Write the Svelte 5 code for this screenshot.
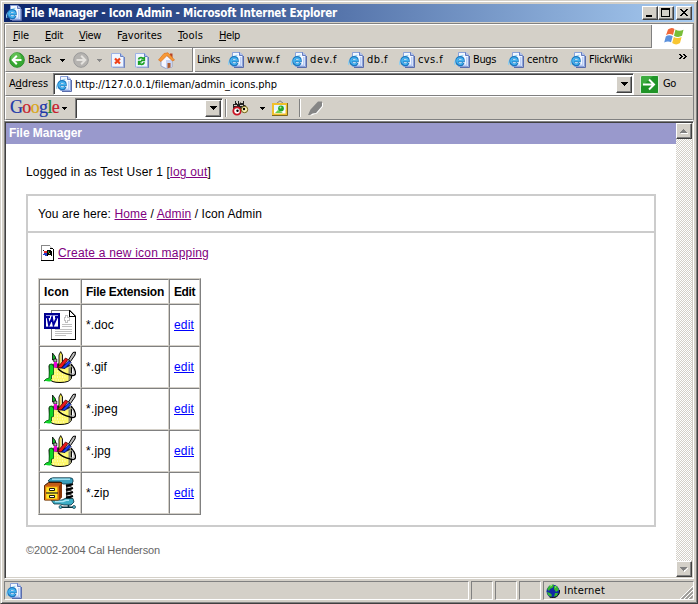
<script>
  const menus = [
    { key: 'F', rest: 'ile', w: 16, gap: 16 },
    { key: 'E', rest: 'dit', w: 18, gap: 16 },
    { key: 'V', rest: 'iew', w: 22, gap: 16 },
    { pre: 'F', key: 'a', rest: 'vorites', w: 45, gap: 16 },
    { key: 'T', rest: 'ools', w: 25, gap: 16 },
    { key: 'H', rest: 'elp', w: 21, gap: 0 }
  ];
  const links = [
    { name: 'www.f', w: 33, slot: 63 },
    { name: 'dev.f', w: 27, slot: 57 },
    { name: 'db.f', w: 21, slot: 51 },
    { name: 'cvs.f', w: 25, slot: 55 },
    { name: 'Bugs', w: 23, slot: 54 },
    { name: 'centro', w: 31, slot: 62 },
    { name: 'FlickrWiki', w: 43, slot: 70 }
  ];
  const rows = [
    { ext: '*.doc', kind: 'doc', w: 28 },
    { ext: '*.gif', kind: 'art', w: 21 },
    { ext: '*.jpeg', kind: 'art', w: 32 },
    { ext: '*.jpg', kind: 'art', w: 25 },
    { ext: '*.zip', kind: 'zip', w: 23 }
  ];

  // Spreads the letters so that a label takes its intended width.
  function fit(node, width) {
    const set = () => {
      node.style.letterSpacing = '0px';
      const natural = node.getBoundingClientRect().width;
      node.style.letterSpacing = (width - natural) / node.textContent.length + 'px';
    };
    set();
    document.fonts?.ready.then(set);
  }
</script>

{#snippet ie()}
  <svg class="ie" width="16" height="16" viewBox="0 0 16 16">
    <path d="M6 15.500h9.500V4" fill="none" stroke="#5a6cab" />
    <path d="M4.500 .5h7.500l2.500 2.500v11.500h-10z" fill="#f4f8ff" stroke="#8ba3da" />
    <path d="M11.500 .5v3h3" fill="#a9bdee" stroke="#4a62ae" stroke-width=".8" />
    <path d="M12.800 5v8.200H8" fill="none" stroke="#b7c9f4" stroke-width="1.400" />
    <path d="M1 13C-1 9.500 4 4 9.500 3" fill="none" stroke="#8fd0f2" stroke-width="1.200" />
    <path d="M2.600 9h6.900c0-4.900-6.900-4.900-6.900 0 0 4.700 5.300 4.900 6.800 1.900" fill="none" stroke="#1a74bd" stroke-width="2.500" />
    <path d="M2.800 8.700h6.400c-.4-3.900-6.200-3.700-6.400.3.200 3.500 4.200 4.200 5.800 2" fill="none" stroke="#45b3ef" stroke-width="1.500" />
  </svg>
{/snippet}

{#snippet down()}
  <svg width="5" height="3" viewBox="0 0 5 3" shape-rendering="crispEdges"><path d="M0 0h5v1h-1v1h-1v1h-1v-1h-1v-1h-1z" fill="currentColor" /></svg>
{/snippet}

{#snippet combo()}
  <div class="combo"><svg width="7" height="4" viewBox="0 0 7 4" shape-rendering="crispEdges"><path d="M0 0h7v1h-1v1h-1v1h-1v1h-1v-1h-1v-1h-1v-1h-1z" /></svg></div>
{/snippet}

{#snippet scrollBtn(up)}
  <div class="sbtn">
    <svg width="8" height="5" viewBox="0 0 8 5" shape-rendering="crispEdges">
      {#if up}
        <path d="M1 4h7v1h-7z" fill="#fff" /><path d="M3 0h1v1h1v1h1v1h1v1h-7v-1h1v-1h1v-1h1z" fill="#808080" />
      {:else}
        <path d="M7 1h1v1h-1v1h-1v1h-1v1h-1v-2h2z" fill="#fff" /><path d="M0 0h7v1h-1v1h-1v1h-1v1h-1v-1h-1v-1h-1v-1h-1z" fill="#808080" />
      {/if}
    </svg>
  </div>
{/snippet}

<div class="window">
  <div class="title">
    {@render ie()}
    <b><span use:fit={313}>File Manager - Icon Admin - Microsoft Internet Explorer</span></b>
    <div class="wbtns">
      <i><svg width="12" height="10" shape-rendering="crispEdges"><path d="M2 7h6v2h-6z" /></svg></i>
      <i><svg width="12" height="10" shape-rendering="crispEdges"><path fill-rule="evenodd" d="M1 0h9v9h-9zM2 2v6h7v-6z" /></svg></i>
      <i class="close"><svg width="12" height="10" shape-rendering="crispEdges"><path d="M2 1h2v1h1v1h2v-1h1v-1h2v1h-1v1h-1v1h-1v1h1v1h1v1h1v1h-2v-1h-1v-1h-2v1h-1v1h-2v-1h1v-1h1v-1h1v-1h-1v-1h-1v-1h-1z" /></svg></i>
    </div>
  </div>

  <div class="rebar">
    <div class="band menu">
      {#each menus as m}
        <span class="item" style:width="{m.w + m.gap}px"><span use:fit={m.w}>{m.pre ?? ''}<u>{m.key}</u>{m.rest}</span></span>
      {/each}
      <div class="flag">
        <svg width="20" height="19" viewBox="0 0 20 19">
          <path d="M4 2.500Q7.500-.3 10.500 2L9 8Q5.500 6 2 8.300z" fill="#f06838" />
          <path d="M11.500 2.500Q15 5 19.500 2.700L18 8.800Q14 11 10 8.700z" fill="#78bd38" />
          <path d="M1.800 9.400Q5 7 8.700 9.300L7 15.300Q4 13.500 .2 15.500z" fill="#5b91dd" />
          <path d="M9.800 10Q13.500 12 17.600 9.900L16 16Q12 18.800 8.200 16z" fill="#f8c632" />
        </svg>
      </div>
    </div>

    <div class="band tools">
      <svg class="back" width="16" height="16" viewBox="0 0 16 16"><circle cx="8" cy="8" r="7.300" fill="#37a832" stroke="#2b8f2c" /><circle cx="7" cy="5.500" r="5" fill="#7bd168" opacity=".6" /><path d="M7.800 3.800L3.700 8l4.100 4.200M4 8h8.500" stroke="#fff" stroke-width="2" fill="none" /></svg>
      <span class="backtext"><span use:fit={23}>Back</span></span>
      <span class="dd">{@render down()}</span>
      <svg class="fwd" width="16" height="16" viewBox="0 0 16 16"><circle cx="8" cy="8" r="7.300" fill="#b5b3b0" stroke="#999" /><path d="M8.200 3.800L12.300 8l-4.100 4.200M12 8H3.500" stroke="#e4e2de" stroke-width="2" fill="none" /></svg>
      <span class="dd dim">{@render down()}</span>
      <svg class="stop" width="14" height="16" viewBox="0 0 14 16"><path d="M13.500 5v10.800H2" fill="none" stroke="#6f82bb" /><path d="M.5 1.500h9l3 3v10.500h-12z" fill="#f0f6ff" stroke="#9db2e4" /><path d="M9.500 1.500v3h3" fill="#a9bdec" stroke="#6a82c2" /><path d="M4 6.500l5 5M9 6.500l-5 5" stroke="#f04018" stroke-width="2.200" /></svg>
      <svg class="refresh" width="14" height="16" viewBox="0 0 14 16"><path d="M13.500 5v10.800H2" fill="none" stroke="#6f82bb" /><path d="M.5 1.500h9l3 3v10.500h-12z" fill="#f0f6ff" stroke="#9db2e4" /><path d="M9.500 1.500v3h3" fill="#a9bdec" stroke="#6a82c2" /><path d="M3.500 7.500c.5-2.500 4-2.500 4.800-.6M9.300 5V8.300H6M9.300 10.200c-.8 2.700-4 2.700-5 .7M3.700 13V9.700h3" stroke="#1ba124" stroke-width="1.700" fill="none" /></svg>
      <svg class="home" width="17" height="17" viewBox="0 0 17 17"><path d="M3 8l5-5 6 5v7l-6 1.500-5-2.500z" fill="#f5f6ff" stroke="#8797c4" stroke-width=".8" /><path d="M8 8v8.500l6-1.500V8z" fill="#c7d3f3" /><path d="M12 1.500h2.500v5l-2.500-2z" fill="#b84524" /><path d="M.5 8L6 1.500l4-.7L16.500 8l-2 1L9 3.500 3 9.500z" fill="#f79a37" stroke="#df721c" stroke-width=".7" /><path d="M9.500 11h3v4.500l-3 .7z" fill="#b05c2e" /></svg>
      <div class="sep2"></div>
      <span class="lk"><span use:fit={23}>Links</span></span>
      {#each links as l}
        <span class="link" style:width="{l.slot}px">{@render ie()}<span use:fit={l.w}>{l.name}</span></span>
      {/each}
      <svg class="chev" width="8" height="5" viewBox="0 0 8 5" shape-rendering="crispEdges"><path d="M0 0h2v1h1v1h1v1h-1v1h-1v1h-2v-1h1v-1h1v-1h-1v-1h-1zM4 0h2v1h1v1h1v1h-1v1h-1v1h-2v-1h1v-1h1v-1h-1v-1h-1z" /></svg>
    </div>

    <div class="band addr">
      <span class="alabel"><span use:fit={39}>A<u>d</u>dress</span></span>
      <div class="field url">{@render ie()}<span class="utext"><span use:fit={202}>http://127.0.0.1/fileman/admin_icons.php</span></span>{@render combo()}</div>
      <svg class="go" width="19" height="19" viewBox="0 0 19 19"><rect x=".5" y=".5" width="18" height="18" rx="1.500" fill="#3cab3f" stroke="#dfeedd" /><path d="M1 18V12L13 1h5v17z" fill="#0b8618" opacity=".6" /><path d="M3 9.500h11M9 4.500l5 5-5 5" fill="none" stroke="#fff" stroke-width="2" /></svg>
      <span use:fit={13}>Go</span>
    </div>

    <div class="band google">
      <span class="glogo"><span use:fit={49}><em class="b">G</em><em class="r">o</em><em class="y">o</em><em class="b">g</em><em class="g">l</em><em class="r">e</em></span></span>
      <span class="dd">{@render down()}</span>
      <div class="field search">{@render combo()}</div>
      <div class="sep"></div>
      <svg class="bino" width="17" height="16" viewBox="0 0 17 16"><path d="M1 9V4h2V1h1v2h2V1h1v3l2-2v1h2V1h1v3l2 2v3z" fill="#222" /><path d="M2 5.500h3M8 5.500h3M5 3.500h1M12 4.500h1" stroke="#d4d0c8" /><circle cx="5" cy="11" r="3.700" fill="#fff" stroke="#c91423" stroke-width="1.800" /><circle cx="5.500" cy="10.800" r="1.200" /><circle cx="12.500" cy="9.500" r="3.200" fill="#fbf5bb" stroke="#6c5a10" stroke-width="1" /><circle cx="12" cy="9" r="1.200" /></svg>
      <span class="dd">{@render down()}</span>
      <svg class="pic" width="16" height="16" viewBox="0 0 16 16"><path d="M4.500 3.500L8 .8l3.500 2.700" fill="none" stroke="#666" stroke-width=".8" /><rect x="1" y="4" width="13.500" height="10.500" fill="#fff" stroke="#efbf2c" stroke-width="2" /><path d="M0 15.500h15.500V3" fill="none" stroke="#7c6720" stroke-width="1" /><path d="M2 5h11.500v5H2z" fill="#e2f3ff" /><circle cx="9" cy="8.500" r="2.900" fill="#23a62c" /><path d="M3 13l3-3 5 3z" fill="#6ccf50" /><circle cx="8.500" cy="7.500" r="1" fill="#b4efa0" /></svg>
      <div class="sep s3"></div>
      <svg class="pen" width="16" height="15" viewBox="0 0 16 15"><path d="M2 15l5-2 2-.5 6-7V2h-1z" fill="#fff" /><path d="M0 14L2.500 8.500l7.500-8h4V5l-6 7-3.500.5L2 14z" fill="#858585" /></svg>
    </div>
  </div>

  <div class="view">
    <div class="page">
      <div class="phead"><span use:fit={73}>File Manager</span></div>
      <div class="login"><span use:fit={185}>Logged in as Test User 1 [<a class="v" href="#out">log out</a>]</span></div>
      <div class="box">
        <div class="crumbs"><span use:fit={224}>You are here: <a class="v" href="#home">Home</a> / <a class="v" href="#admin">Admin</a> / Icon Admin</span></div>
        <div class="inner">
          <div class="create">
            <svg width="13" height="16" viewBox="0 0 13 16" shape-rendering="crispEdges"><path d="M0 0h9v1h1v1h1v1h1v1h1v12h-13z" fill="#000" /><path d="M0 0h9v1h-8v14h-1z" fill="#888" /><path d="M1 1h8v3h3v11h-11z" fill="#fff" /><path d="M9 1h1v1h1v1h-2z" fill="#ccc" /><path d="M6 5h4v1h1v5h-1v-1h-3v1h-1z" /><path d="M2 5h1v1h-1zM4 6h2v1h-2zM3 9h2v1h-2z" fill="#111" /><path d="M3 6h3v2h-3z" fill="#e32b2b" /><path d="M3 8h3v3h-2v-1h-2v-1h1z" fill="#223cc9" /><path d="M7 6h1v2h-1z" fill="#248a33" /><path d="M8 8h1v1h-1z" fill="#e6d626" /></svg>
            <a class="v" href="#create"><span use:fit={151}>Create a new icon mapping</span></a>
          </div>
          <table>
            <thead>
              <tr><th class="c1"><span use:fit={25}>Icon</span></th><th class="c2"><span use:fit={78}>File Extension</span></th><th class="c3"><span use:fit={21}>Edit</span></th></tr>
            </thead>
            <tbody>
              {#each rows as r}
                <tr>
                  <td>
                    {#if r.kind === 'doc'}
                      <svg width="32" height="32" viewBox="0 0 32 32" shape-rendering="crispEdges">
                        <path d="M7 1h19l6 6v24H7z" fill="#808080" />
                        <path d="M8 2h17v6h6v22H8z" fill="#fff" />
                        <path d="M25 1h1v1h1v1h1v1h1v1h1v1h1v1h1v24H7v-1h24V8h-6z" />
                        <path d="M26 3v4h4z" fill="#fff" />
                        <path d="M21 6h3v2h2v4h-2v2h-3v-2h-1V8h1z" fill="#c0c0c0" /><path d="M22 7h1v2h2v2h-2v2h-1v-2h-1V9h1z" fill="#fff" />
                        <path d="M18 15h10v1H18zM18 17h10v1H18zM11 20h17v1H11zM11 22h17v1H11zM11 24h17v1H11zM11 26h11v1H11z" fill="#c0c0c0" />
                        <path d="M0 4h16v16H0z" fill="#000090" /><path d="M2 6h12v12H2z" fill="#fff" />
                        <path d="M2 6h12v1H2zM2 17h12v1H2z" fill="#9a9ae0" />
                        <g shape-rendering="auto"><path d="M3.500 8l1.500 8L8 9l1.500 7L13 8M2 8h4M7 8.500h2M11 8h3" fill="none" stroke="#0000a0" stroke-width="1.900" /></g>
                      </svg>
                    {:else if r.kind === 'art'}
                      <svg width="32" height="32" viewBox="0 0 32 32">
                        <path d="M5 14.500Q16 11 27.500 14.500V27Q26 31.500 16 31.500 7 31.500 6 28z" fill="#fdf86a" stroke="#000" />
                        <path d="M24.500 17v13q2.500-1 2.500-3.500V15z" fill="#8e8e72" />
                        <ellipse cx="16.300" cy="14.700" rx="10.300" ry="2.700" fill="#303030" stroke="#d8d8b0" stroke-width=".8" />
                        <path d="M8 20h14M8 23h15M8 26h15M9 29h12" stroke="#fffde8" stroke-width="1" stroke-dasharray="1 1.500" />
                        <path d="M8.500 2l3 4v3h-3z" fill="#12b52a" stroke="#000" stroke-width=".8" />
                        <path d="M9.800 8h3v3h-3z" fill="#b8b8b8" stroke="#000" stroke-width=".7" /><path d="M10 11h3v5.500h-3z" fill="#ee00d8" />
                        <path d="M15 16V4L16.700.6 18.500 4v12z" fill="#fff54a" stroke="#000" stroke-width=".9" /><path d="M17.200 4v12" stroke="#c0c0c0" />
                        <path d="M13.500 16.500L21.500 7l2.500 1.500L17.500 17z" fill="#ea1818" stroke="#500" stroke-width=".8" />
                        <path d="M17.500 17L25 9.500l2 2L21 17.500z" fill="#153ff0" stroke="#003" stroke-width=".8" />
                        <path d="M24.500 9l4.500-7.500 2.500-.5-.5 3-4.500 6.500z" fill="#bcbcbc" stroke="#000" stroke-width="1" />
                        <path d="M27 13q4.500 5 4.500 9.500-1 3-5 1.500-9-2-12.500-6.500" fill="none" stroke="#000" stroke-width="1.400" />
                        <path d="M27.500 15q2.800 4 2.800 7-2 1.800-4.300.7" fill="none" stroke="#bbb" />
                        <path d="M5.500 13.500q3-2 4 2v8l-2 .5v4l-3 1.500H1l-1 .5 2-2 3-1z" fill="#10d628" stroke="#064d10" stroke-width=".8" />
                        <path d="M.5 29.500q3-3 6.500-1l1 1.500q-3 1-7.500-.5z" fill="#10d628" />
                      </svg>
                    {:else}
                      <svg width="32" height="32" viewBox="0 0 32 32">
                        <path d="M22 6h5.500v17H22z" fill="#444" />
                        <path d="M22 9l7-2M22 13l7-2M22 17l7-2M22 21l7-2" stroke="#000" stroke-width="2" /><path d="M23.500 10.500h3M23.500 14.500h3M23.500 18.500h3" stroke="#ccc" />
                        <path d="M4 4Q6 .8 9 .8h17q3 0 3 2.200v2q-1 2-4 2h-6l-3-2.300H6z" fill="#3a9fbd" stroke="#08313f" stroke-width=".8" /><path d="M8 2.200h18" stroke="#a9e6f5" stroke-width="1.400" />
                        <path d="M7 23h11l3-1.500h8l1 3.500-3 3h-7l-4-1h-6z" fill="#3cadc5" stroke="#08313f" stroke-width=".8" /><path d="M11 24.500h8l3-1.200h3" stroke="#a9e6f5" stroke-width="1.400" fill="none" />
                        <path d="M24.500 28v3M17 30.300h12" stroke="#082f3c" stroke-width="1.600" /><circle cx="16.500" cy="30" r="1.500" fill="#58c3d7" stroke="#082f3c" stroke-width=".7" /><circle cx="30" cy="30" r="1.500" fill="#58c3d7" stroke="#082f3c" stroke-width=".7" />
                        <path d="M.5 8.500l4-3h13v14.500l-3 3H.5z" fill="#c05a18" stroke="#3c1a02" /><path d="M15 9l3-3v14l-3 3z" fill="#8c3608" />
                        <path d="M1.500 9.500h12.500v13H1.500z" fill="#ffe829" stroke="#e07a10" stroke-width="1.400" /><path d="M2 16h12" stroke="#222" stroke-width="1.200" />
                        <path d="M5.500 11.500h5v2h-5zM5.500 18.500h5v2h-5z" fill="#fff" stroke="#000" stroke-width=".9" />
                      </svg>
                    {/if}
                  </td>
                  <td><span use:fit={r.w}>{r.ext}</span></td>
                  <td><a href="#edit"><span use:fit={20}>edit</span></a></td>
                </tr>
              {/each}
            </tbody>
          </table>
        </div>
      </div>
      <div class="foot"><span use:fit={134}>©2002-2004 Cal Henderson</span></div>
    </div>
    <div class="scroll">{@render scrollBtn(true)}{@render scrollBtn(false)}</div>
  </div>

  <div class="status">
    <div class="pane main">{@render ie()}</div>
    <div class="pane small"></div>
    <div class="pane small"></div>
    <div class="pane small"></div>
    <div class="pane zone">
      <svg width="14" height="14" viewBox="0 0 14 14"><circle cx="7" cy="7.300" r="6.500" fill="#1029a5" /><path d="M1 5l3-4 4-.5-1 3-3 1.500-1 2zM8 2l3 0 2 4-3 2-2-3zM1 8l3 1 2 2-1 2-3-2zM9 9l3 0-1 3-3 1z" fill="#36b830" /><path d="M13.500 6c.8 6-5 9-10 7" fill="none" stroke="#111" /><path d="M4 2l2-.5M9 3h1" stroke="#a5ef8d" /></svg>
      <span use:fit={41}>Internet</span>
      <svg class="grip" width="13" height="13" viewBox="0 0 13 13"><path d="M0 13L13 0M4 13l9-9M8 13l5-5" stroke="#fff" /><path d="M1.500 13L13 1.500M2.500 13L13 2.500M5.500 13L13 5.500M6.500 13L13 6.500M9.500 13L13 9.500M10.500 13l2.500-2.500" stroke="#808080" stroke-width=".9" /></svg>
    </div>
  </div>
</div>

<style>
  :global(body) { margin: 0; overflow: hidden; }
  .window, .window * { box-sizing: border-box; }
  .window {
    width: 698px; height: 604px; background: #d4d0c8;
    border: 1px solid; border-color: #d4d0c8 #404040 #404040 #d4d0c8;
    box-shadow: inset 1px 1px #fff, inset -1px -1px #808080;
    padding: 3px 3px 2px 3px;
    display: flex; flex-direction: column;
    font: 11px/14px "DejaVu Sans Condensed", "DejaVu Sans", sans-serif; font-stretch: condensed;
    color: #000; white-space: nowrap;
  }
  svg { display: block; flex: none; }
  .title { height: 18px; flex: none; display: flex; align-items: center; background: linear-gradient(90deg, #0a246a, #a6caf0); color: #fff; padding: 0 2px; }
  .title b { flex: 1; margin-left: 2px; font-size: 11.500px; }
  .wbtns { display: flex; color: #000; }
  .wbtns i, .sbtn, .combo { background: #d4d0c8; border: 1px solid; border-color: #fff #404040 #404040 #fff; box-shadow: inset -1px -1px #808080; }
  .wbtns i { width: 16px; height: 14px; padding: 1px; }
  .wbtns .close { margin-left: 2px; }
  .rebar { margin-top: 1px; flex: none; height: 98px; border: 1px solid; border-color: #808080 #808080 #fff #808080; }
  .band { height: 24px; border: 1px solid; border-color: #fff transparent #808080 #fff; display: flex; align-items: center; }
  .menu { padding-left: 7px; }
  .item { flex: none; margin-top: -1px; }
  .flag { margin-left: auto; width: 41px; height: 23px; align-self: flex-start; background: #fff; border-left: 1px solid #808080; padding: 2px 0 0 12px; }
  .tools { padding-left: 3px; }
  .backtext { width: 32px; margin-left: 3px; }
  .dd { width: 5px; height: 3px; flex: none; }
  .dim { color: #888; }
  .fwd { margin: 0 8px; }
  .stop { margin: 0 10px 0 9px; }
  .refresh { margin-right: 9px; }
  .home { margin-right: 17px; }
  .sep2 { width: 3px; height: 24px; margin: 0 2px 0 0; border-left: 1px solid #808080; background: #fff; flex: none; }
  .lk { width: 31px; flex: none; }
  .link { display: flex; align-items: center; gap: 3px; flex: none; }
  .chev { margin: -8px 0 0 39px; }
  .addr { padding-left: 3px; }
  .alabel { width: 44px; flex: none; }
  .field { background: #fff; border: 1px solid; border-color: #808080 #fff #fff #808080; box-shadow: inset 1px 1px #404040; display: flex; align-items: center; }
  .url { width: 581px; height: 22px; padding: 1px 1px 1px 2px; }
  .utext { flex: 1; margin: 1px 0 0 3px; }
  .combo { width: 16px; height: 17px; display: flex; align-items: center; justify-content: center; flex: none; }
  .go { margin: 0 4px 0 6px; }
  .google { padding-left: 4px; }
  .glogo { width: 52px; flex: none; font: 18px/20px "Liberation Serif", serif; margin-top: -3px; -webkit-text-stroke: .2px; }
  .glogo em { font-style: normal; }
  .b { color: #2039a8; } .r { color: #c6202c; } .y { color: #d9a516; } .g { color: #1c8a2e; }
  .search { width: 148px; height: 21px; margin-left: 8px; padding: 1px 1px 1px 0; justify-content: flex-end; flex: none; }
  .sep { width: 2px; height: 18px; margin: 0 5px 0 2px; background: #808080; border-right: 1px solid #fff; flex: none; }
  .bino { margin-right: 11px; }
  .pic { margin-left: 7px; }
  .s3 { margin: 0 7px 0 11px; }
  .view { height: 458px; flex: none; display: flex; border: 1px solid; border-color: #808080 #fff #fff #808080; box-shadow: inset 1px 1px #404040, inset -1px -1px #d4d0c8; padding: 1px; }
  .page { width: 670px; background: #fff; font: 12px/14px "Liberation Sans", Arial, sans-serif; font-stretch: normal; }
  .phead { height: 21px; line-height: 21px; background: #99c; color: #fff; font-weight: bold; padding-left: 3px; }
  .login { margin: 21px 0 0 20px; }
  .box { margin: 15px 20px 0; height: 333px; border: 2px solid #ccc; }
  .crumbs { height: 37px; border-bottom: 2px solid #ccc; padding: 11px 0 0 10px; }
  .inner { padding: 12px 10px 0; }
  .create { display: flex; align-items: center; height: 16px; padding-left: 3px; gap: 4px; margin-bottom: 17px; }
  a { color: #00f; text-decoration: underline; }
  a.v { color: #800080; }
  table { border-collapse: separate; border-spacing: 0; border: 1px solid; border-color: #d4d0c8 #808080 #808080 #d4d0c8; table-layout: fixed; width: 163px; }
  th, td { border: 1px solid; border-color: #808080 #d4d0c8 #d4d0c8 #808080; padding: 0 4px; text-align: left; height: 42px; }
  th { height: 25px; }
  .c1 { width: 42px; } .c2 { width: 88px; } .c3 { width: 31px; }
  .foot { margin: 16px 0 0 20px; font-size: 11px; color: #666; }
  .scroll { width: 16px; display: flex; flex-direction: column; justify-content: space-between; background: repeating-conic-gradient(#fff 0 25%, #d4d0c8 0 50%) 0 0/2px 2px; }
  .sbtn { width: 16px; height: 16px; display: flex; align-items: center; justify-content: center; }
  .status { display: flex; gap: 2px; margin-top: 2px; height: 19px; flex: none; }
  .pane { border: 1px solid; border-color: #808080 #fff #fff #808080; display: flex; align-items: center; }
  .main { width: 465px; padding-left: 1px; }
  .small { width: 22px; }
  .zone { flex: 1; padding-left: 2px; gap: 4px; }
  .grip { margin-left: auto; align-self: flex-end; }
</style>
